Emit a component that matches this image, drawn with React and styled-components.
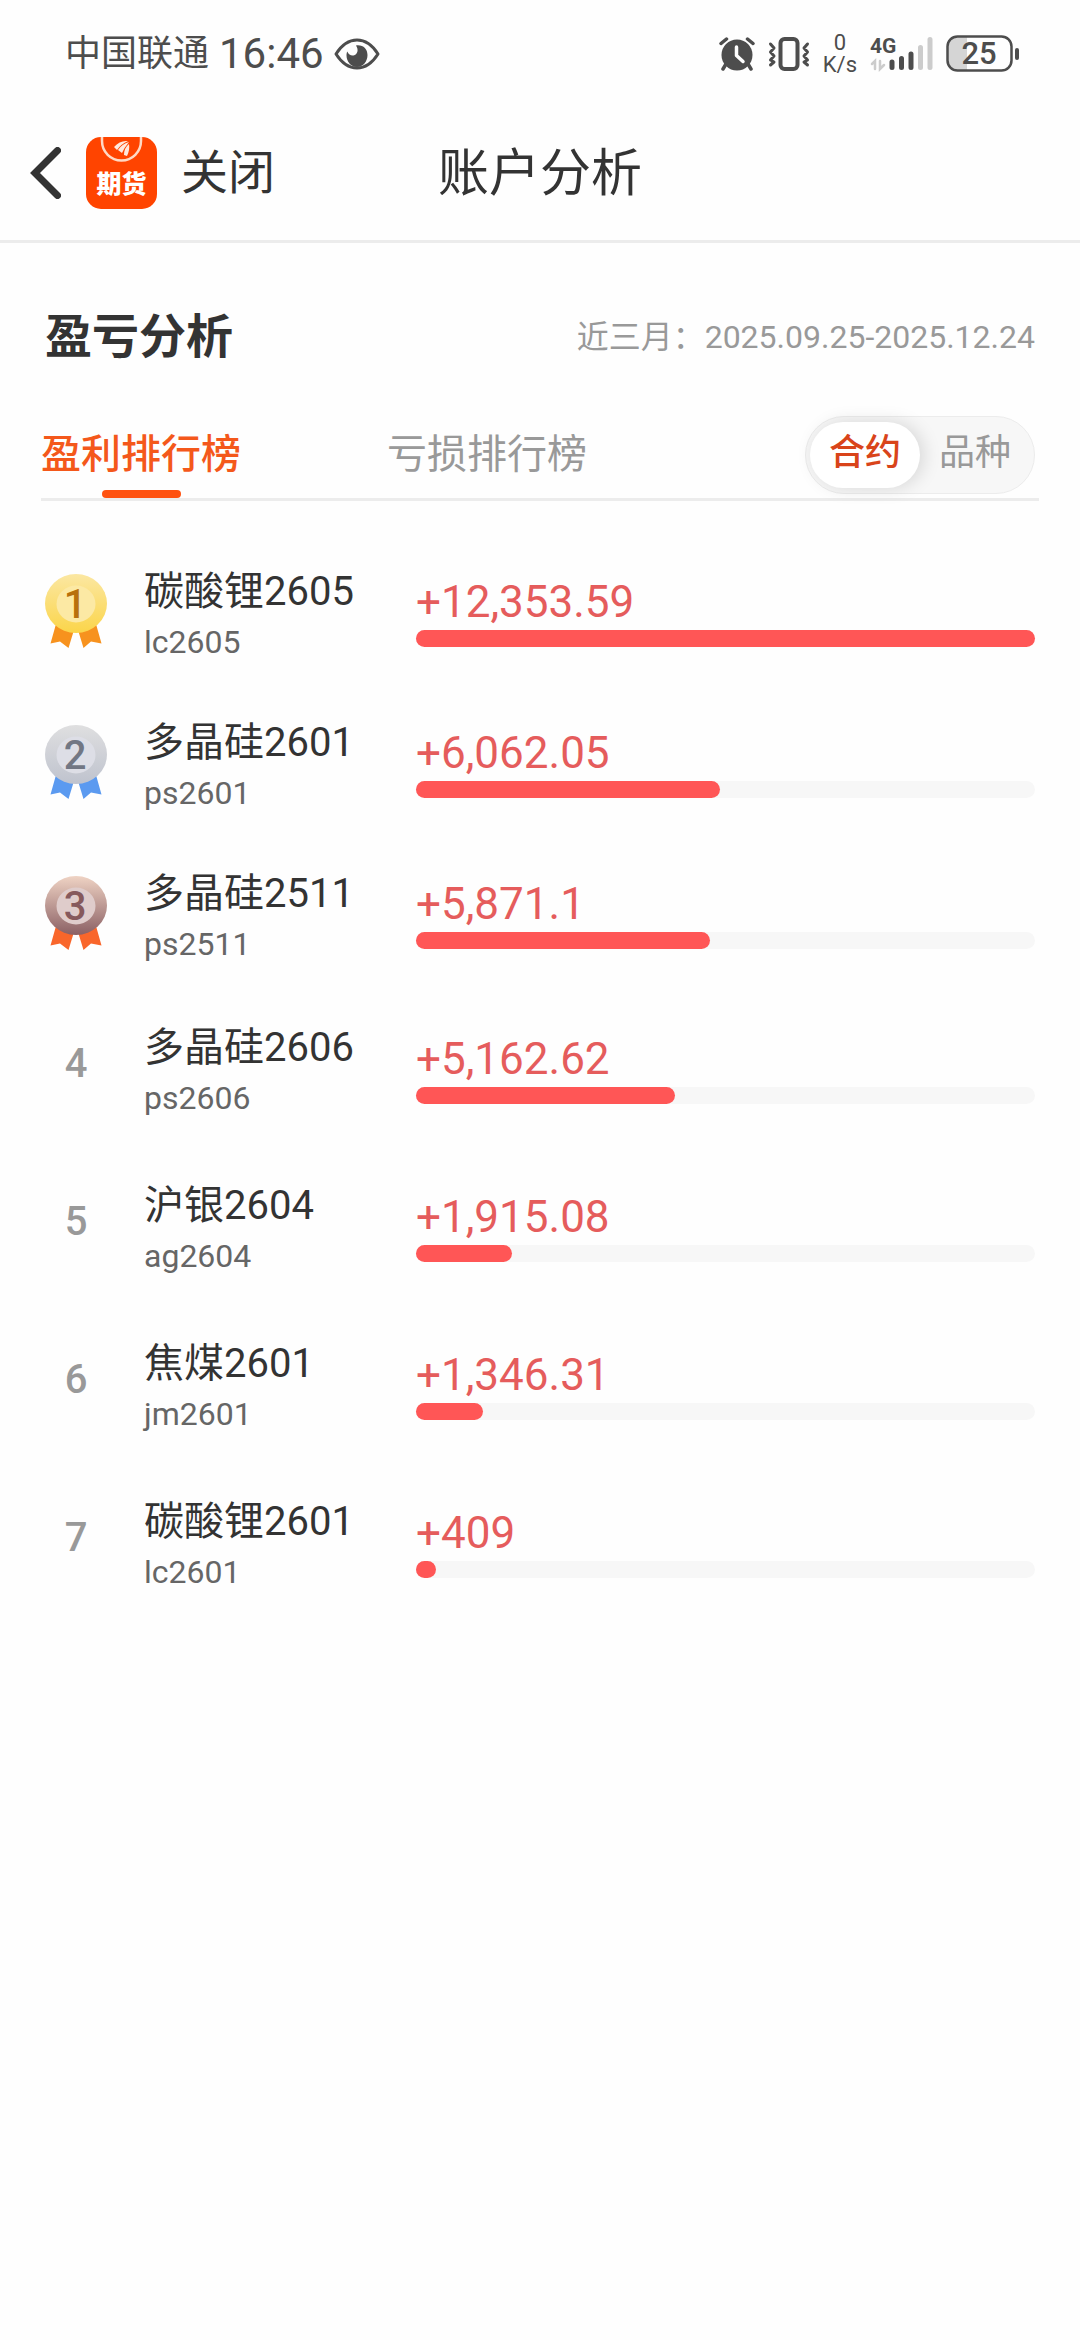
import React, { useState } from "react"
import styled, { createGlobalStyle, css } from "styled-components"

const GlobalStyle = createGlobalStyle`
  *, *::before, *::after {
    box-sizing: border-box;
  }

  body {
    margin: 0;
    background: #fefefe;
    color: #333333;
    font-family: Roboto, "Noto Sans CJK SC", sans-serif;
  }

  button {
    padding: 0;
    border: 0;
    background: none;
    color: inherit;
    font: inherit;
    cursor: pointer;
  }
`

const Page = styled.div`
  display: flex;
  flex-direction: column;
  min-height: 100vh;
`

/* status bar */

const StatusBar = styled.div`
  display: flex;
  align-items: center;
  justify-content: space-between;
  height: 108px;
  padding: 0 60px 0 65px;
  color: #4d4d4d;
`

const StatusGroup = styled.div`
  display: flex;
  align-items: center;
  gap: ${({ $gap }) => $gap}px;
`

const Carrier = styled.span`
  font-size: 36px;
  line-height: 48px;
`

const Clock = styled.span`
  font-size: 42px;
  line-height: 48px;
`

const NetSpeed = styled.span`
  display: flex;
  flex-direction: column;
  align-items: center;
  font-size: 22px;
  line-height: 22px;
`

/* navigation */

const NavBar = styled.header`
  display: grid;
  grid-template-columns: 1fr auto 1fr;
  align-items: center;
  height: 135px;
  padding: 0 30px;
  border-bottom: 3px solid #ececec;
`

const NavLeft = styled.div`
  display: flex;
  align-items: center;
  padding-bottom: 3px;
`

const NavButton = styled.button`
  display: flex;
  align-items: center;
`

const CloseButton = styled(NavButton)`
  margin-left: 24px;
  font-size: 47px;
  line-height: 60px;
`

const AppLogo = styled.svg`
  display: block;
  margin-left: 25px;
`

const NavTitle = styled.h1`
  margin: 0;
  font-size: 51px;
  font-weight: 400;
  line-height: 64px;
`

/* section heading */

const SectionHead = styled.div`
  display: flex;
  align-items: center;
  justify-content: space-between;
  padding: 62px 45px 0;
`

const SectionTitle = styled.h2`
  margin: 0;
  font-size: 47px;
  font-weight: 700;
  line-height: 64px;
`

const Period = styled.span`
  color: #999999;
  font-size: 32px;
  line-height: 48px;
`

/* tabs */

const TabBar = styled.div`
  display: flex;
  align-items: flex-end;
  justify-content: space-between;
  margin: 47px 41px 0;
  border-bottom: 3px solid #ececec;
`

const Tabs = styled.div`
  display: flex;
  gap: 146px;
`

const Tab = styled.button`
  display: flex;
  flex-direction: column;
  align-items: center;
  gap: 7px;
  color: #999999;
  font-size: 40px;
  line-height: 56px;

  &::after {
    content: "";
    width: 79px;
    height: 8px;
    border-radius: 4px;
  }

  ${({ $active }) =>
    $active &&
    css`
      color: #f4581b;
      font-weight: 500;

      &::after {
        background: #ff5210;
      }
    `}
`

const Segmented = styled.div`
  display: flex;
  align-items: center;
  margin: 0 4px 4px 0;
  padding: 5px 4px;
  border: 1px solid #ececec;
  border-radius: 40px;
  background: #f7f7f7;
`

const Segment = styled.button`
  height: 66px;
  padding: 0 19px 4px;
  border-radius: 33px;
  color: #999999;
  font-size: 36px;
  line-height: 60px;

  ${({ $active }) =>
    $active &&
    css`
      background: #ffffff;
      box-shadow: 4px 0 18px rgba(0, 0, 0, 0.13);
      color: #d9441a;
      font-weight: 500;
    `}
`

/* ranking */

const RankList = styled.ol`
  margin: 0;
  padding: 34px 45px 0;
  list-style: none;
`

const RankRow = styled.li`
  display: flex;
  align-items: center;
  height: ${({ $medal }) => ($medal ? 151 : 158)}px;
`

const RankCell = styled.div`
  display: flex;
  justify-content: center;
  width: 62px;
  margin-right: 37px;
`

const RankNumber = styled.span`
  padding-bottom: 6px;
  color: #999999;
  font-size: 40px;
  font-weight: 500;
  line-height: 56px;
`

const Contract = styled.div`
  display: flex;
  flex-direction: column;
  width: 272px;
  padding-top: 8px;
`

const ContractName = styled.span`
  font-size: 40px;
  line-height: 54px;
`

const ContractCode = styled.span`
  color: #666666;
  font-size: 32px;
  line-height: 46px;
`

const Result = styled.div`
  flex: 1;
`

const Amount = styled.div`
  color: #e55c5c;
  font-size: 44px;
  line-height: 56px;
`

const Track = styled.div`
  height: 17px;
  background: #f7f7f7;
  border-radius: 9px;
`

const Fill = styled.div`
  height: 100%;
  background: #ff5656;
  border-radius: 9px;
`

const MEDALS = {
  1: { top: "#fbe7a2", bottom: "#fbd54a", inner: "#fce9a4", ink: "#b8700c", ribbon: "#f7921e" },
  2: { top: "#dfdfe0", bottom: "#bfc3ce", inner: "#dddee6", ink: "#727784", ribbon: "#5b9af0" },
  3: { top: "#efd3c4", bottom: "#8b6064", inner: "#dfcccb", ink: "#86595c", ribbon: "#f9662b" },
}

const Medal = ({ rank }) => {
  const c = MEDALS[rank]
  return (
    <svg width="62" height="74" viewBox="0 0 62 74" role="img" aria-label={`第${rank}名`}>
      <defs>
        <linearGradient id={`medal-${rank}`} x1="0" y1="0" x2="0" y2="1">
          <stop offset="0" stopColor={c.top} />
          <stop offset="1" stopColor={c.bottom} />
        </linearGradient>
      </defs>
      <path d="M11 50 L5.500 69.500 L15 67.500 L23.500 74 L29 56 Z" fill={c.ribbon} />
      <path d="M51 50 L56.500 69.500 L46 67.500 L38.500 74 L33 56 Z" fill={c.ribbon} />
      <ellipse cx="31" cy="29.500" rx="31" ry="29.500" fill={`url(#medal-${rank})`} />
      <ellipse cx="31" cy="30" rx="19.500" ry="18.500" fill={c.inner} />
      <text
        x="30"
        y="44"
        textAnchor="middle"
        fill={c.ink}
        fontFamily="Roboto, sans-serif"
        fontSize="40"
        fontWeight="500"
      >
        {rank}
      </text>
    </svg>
  )
}

const EyeIcon = () => (
  <svg width="46" height="32" viewBox="0 0 46 32" fill="none">
    <path
      d="M2 16 C8 6.500 15 2 23 2 C31 2 38 6.500 44 16 C38 25.500 31 30 23 30 C15 30 8 25.500 2 16 Z"
      stroke="currentColor"
      strokeWidth="3"
      strokeLinejoin="round"
    />
    <path
      d="M22 7.500 C29 6.500 33.500 11 33.500 17 C33.500 23.500 29 29 23 29 C17 29 12.500 23.500 12.500 17.500 C12.500 16 12.800 14.500 13.300 13.500 C14.500 16.500 17 18 19.500 17.500 C23.500 16.500 25 12 22 7.500 Z"
      fill="currentColor"
    />
  </svg>
)

const AlarmIcon = () => (
  <svg width="36" height="34" viewBox="0 0 36 34" fill="none" strokeLinecap="round">
    <path d="M7 27 L4 32 M29 27 L32 32" stroke="currentColor" strokeWidth="3.500" />
    <path d="M2 6.500 L7.500 2 M34 6.500 L28.500 2" stroke="currentColor" strokeWidth="3.500" />
    <circle cx="18" cy="18" r="15.500" fill="currentColor" />
    <path d="M17.500 10 V18.500 L24 24.500" stroke="#ffffff" strokeWidth="3.500" strokeLinejoin="round" />
  </svg>
)

const VibrateIcon = () => (
  <svg width="42" height="34" viewBox="0 0 42 34" fill="none" stroke="currentColor">
    <rect x="12.500" y="2" width="17" height="30" rx="4" strokeWidth="4" />
    <path
      d="M2.500 7 L6 11 L2.500 15 L6 19 L2.500 23 L6 25 L2.500 28 M39.500 7 L36 11 L39.500 15 L36 19 L39.500 23 L36 25 L39.500 28"
      strokeWidth="3"
      strokeLinecap="round"
      strokeLinejoin="round"
    />
  </svg>
)

const SignalIcon = () => (
  <svg width="63" height="44" viewBox="0 -4 63 44" strokeLinecap="round" fill="none">
    <text
      x="0"
      y="17"
      fill="currentColor"
      fontFamily="Roboto, sans-serif"
      fontSize="21"
      fontWeight="700"
    >
      4G
    </text>
    <path d="M2 28 L5 25 V33 M10 25 V33 L14 29" stroke="#cccccc" strokeWidth="2.500" />
    <path d="M22 26 V31.500 M31.500 22.500 V31.500 M41 18 V31.500" stroke="currentColor" strokeWidth="5" />
    <path d="M50.500 11.500 V31.500 M60 3.500 V31.500" stroke="#cccccc" strokeWidth="5" />
  </svg>
)

const BatteryIcon = () => (
  <svg width="74" height="38" viewBox="0 0 74 38" fill="none">
    <path d="M12 2 H21 V36 H12 Q2 36 2 26 V12 Q2 2 12 2 Z" fill="#d5d5d5" />
    <rect x="1.500" y="1.500" width="64" height="34" rx="10" stroke="currentColor" strokeWidth="2.500" />
    <rect x="69" y="13" width="4" height="12" rx="2" fill="currentColor" />
    <text
      x="33"
      y="29"
      textAnchor="middle"
      fill="currentColor"
      fontFamily="Roboto, sans-serif"
      fontSize="31"
      fontWeight="500"
    >
      25
    </text>
  </svg>
)

const ChevronIcon = () => (
  <svg width="31" height="52" viewBox="0 0 31 52" fill="none">
    <path
      d="M27.500 3.500 L5 26 L27.500 48.500"
      stroke="currentColor"
      strokeWidth="7"
      strokeLinecap="round"
      strokeLinejoin="miter"
    />
  </svg>
)

const FuturesLogo = () => (
  <AppLogo width="71" height="72" viewBox="0 0 71 72" role="img" aria-label="期货">
    <rect width="71" height="72" rx="15" fill="#ff4400" />
    <path d="M16 0 V4 A19.500 19.500 0 0 0 55 4 V0" fill="none" stroke="#ffd9c4" strokeWidth="2.500" />
    <path
      d="M28 10 Q34 3 42 4 Q35 7 31 13 Z M32 13 Q36 7 43 5 Q38 11 36 16 Z M38 18 Q38 11 43 7 Q44 13 41 19 Z"
      fill="#ffe9de"
    />
    <text
      x="35.500"
      y="56"
      textAnchor="middle"
      fill="#ffffff"
      fontFamily='"Noto Sans CJK SC", sans-serif'
      fontSize="25"
      fontWeight="900"
    >
      期货
    </text>
  </AppLogo>
)

const ROWS = [
  { name: "碳酸锂2605", code: "lc2605", profit: 12353.59 },
  { name: "多晶硅2601", code: "ps2601", profit: 6062.05 },
  { name: "多晶硅2511", code: "ps2511", profit: 5871.1 },
  { name: "多晶硅2606", code: "ps2606", profit: 5162.62 },
  { name: "沪银2604", code: "ag2604", profit: 1915.08 },
  { name: "焦煤2601", code: "jm2601", profit: 1346.31 },
  { name: "碳酸锂2601", code: "lc2601", profit: 409 },
]

const MAX_PROFIT = ROWS[0].profit

const App = () => {
  const [tab, setTab] = useState("盈利排行榜")
  const [group, setGroup] = useState("合约")

  return (
    <Page>
      <GlobalStyle />
      <StatusBar>
        <StatusGroup $gap={10}>
          <Carrier>中国联通</Carrier>
          <Clock>16:46</Clock>
          <EyeIcon />
        </StatusGroup>
        <StatusGroup $gap={13}>
          <AlarmIcon />
          <VibrateIcon />
          <NetSpeed>
            <span>0</span>
            <span>K/s</span>
          </NetSpeed>
          <SignalIcon />
          <BatteryIcon />
        </StatusGroup>
      </StatusBar>

      <NavBar>
        <NavLeft>
          <NavButton type="button" aria-label="返回">
            <ChevronIcon />
          </NavButton>
          <FuturesLogo />
          <CloseButton type="button">关闭</CloseButton>
        </NavLeft>
        <NavTitle>账户分析</NavTitle>
      </NavBar>

      <main>
        <SectionHead>
          <SectionTitle>盈亏分析</SectionTitle>
          <Period>近三月：2025.09.25-2025.12.24</Period>
        </SectionHead>

        <TabBar>
          <Tabs role="tablist">
            {["盈利排行榜", "亏损排行榜"].map((label) => (
              <Tab
                key={label}
                type="button"
                role="tab"
                aria-selected={tab === label}
                $active={tab === label}
                onClick={() => setTab(label)}
              >
                {label}
              </Tab>
            ))}
          </Tabs>
          <Segmented>
            {["合约", "品种"].map((label) => (
              <Segment
                key={label}
                type="button"
                aria-pressed={group === label}
                $active={group === label}
                onClick={() => setGroup(label)}
              >
                {label}
              </Segment>
            ))}
          </Segmented>
        </TabBar>

        <RankList>
          {ROWS.map((row, i) => (
            <RankRow key={row.name} $medal={i < 3}>
              <RankCell>
                {i < 3 ? <Medal rank={i + 1} /> : <RankNumber>{i + 1}</RankNumber>}
              </RankCell>
              <Contract>
                <ContractName>{row.name}</ContractName>
                <ContractCode>{row.code}</ContractCode>
              </Contract>
              <Result>
                <Amount>+{row.profit.toLocaleString("en-US")}</Amount>
                <Track>
                  <Fill style={{ width: `${(row.profit / MAX_PROFIT) * 100}%` }} />
                </Track>
              </Result>
            </RankRow>
          ))}
        </RankList>
      </main>
    </Page>
  )
}

export default App
